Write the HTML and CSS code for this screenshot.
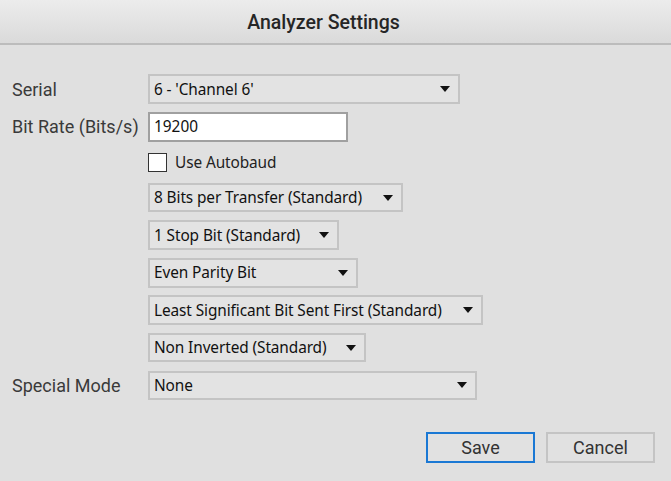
FILE: index.html
```html
<!DOCTYPE html>
<html>
<head>
<meta charset="utf-8">
<link rel="stylesheet" href="styles.css">
</head>
<body>
<div class="dialog">
  <div class="titlebar">Analyzer Settings</div>
  <div class="content">
    <div class="form">
      <div class="label">Serial</div>
      <div class="combo w-serial"><span>6 - 'Channel 6'</span><i class="arrow"></i></div>

      <div class="label">Bit Rate (Bits/s)</div>
      <div class="input">19200</div>

      <div></div>
      <div class="check"><span class="box"></span><span class="check-text">Use Autobaud</span></div>

      <div></div>
      <div class="combo w-bits"><span>8 Bits per Transfer (Standard)</span><i class="arrow"></i></div>

      <div></div>
      <div class="combo w-stop"><span>1 Stop Bit (Standard)</span><i class="arrow"></i></div>

      <div></div>
      <div class="combo w-parity"><span>Even Parity Bit</span><i class="arrow"></i></div>

      <div></div>
      <div class="combo w-lsb"><span>Least Significant Bit Sent First (Standard)</span><i class="arrow"></i></div>

      <div></div>
      <div class="combo w-inv"><span>Non Inverted (Standard)</span><i class="arrow"></i></div>

      <div class="label">Special Mode</div>
      <div class="combo w-special"><span>None</span><i class="arrow"></i></div>
    </div>
    <div class="buttons">
      <div class="btn primary">Save</div>
      <div class="btn">Cancel</div>
    </div>
  </div>
</div>
</body>
</html>
```
FILE: styles.css
```css
html, body {
  margin: 0;
  padding: 0;
  width: 671px;
  height: 481px;
  overflow: hidden;
  background: #e0e0e0;
}
.dialog {
  width: 671px;
  height: 481px;
  display: flex;
  flex-direction: column;
  font-family: Roboto, "Noto Sans", sans-serif;
}
.titlebar {
  height: 45px;
  border-bottom: 2px solid #bcbcbc;
  background: linear-gradient(#ececec, #dadada);
  display: flex;
  align-items: center;
  justify-content: center;
  font-size: 19.5px;
  font-weight: 500;
  color: #262626;
  box-sizing: border-box;
  padding: 1px 24px 0 0;
}
.content {
  flex: 1;
  display: flex;
  flex-direction: column;
  padding: 29px 16px 0 12px;
}
.form {
  display: grid;
  grid-template-columns: 136px auto;
  grid-template-rows: 30px 30px 26px 30px 30px 30px 30px 30px 30px;
  row-gap: 7.5px;
  align-items: center;
  justify-items: start;
}
.label {
  font-size: 18px;
  color: #3a3a3a;
}
.combo {
  height: 30px;
  box-sizing: border-box;
  border: 2px solid #c4c4c4;
  background: #e3e3e3;
  display: flex;
  align-items: center;
  justify-content: space-between;
  padding: 0 8px 0 4px;
  font-family: "Noto Sans", "DejaVu Sans", sans-serif;
  font-size: 15.4px;
  color: #111;
  letter-spacing: -0.1px;
}
.arrow {
  width: 0;
  height: 0;
  border-left: 5px solid transparent;
  border-right: 5px solid transparent;
  border-top: 6px solid #111;
  margin-left: 10px;
  flex-shrink: 0;
}
.w-serial { width: 312px; }
.w-bits { width: 255px; height: 29px; }
.w-stop { width: 191px; }
.w-parity { width: 210px; }
.w-lsb { width: 335px; }
.w-inv { width: 218px; height: 29px; }
.w-special { width: 329px; height: 29px; }
.input {
  width: 200px;
  height: 30px;
  box-sizing: border-box;
  border: 2px solid #a0a0a0;
  background: #fff;
  display: flex;
  align-items: center;
  padding-left: 4px;
  font-family: "Noto Sans", "DejaVu Sans", sans-serif;
  font-size: 15.4px;
  color: #111;
}
.check {
  display: flex;
  align-items: center;
  gap: 8px;
}
.box {
  width: 19px;
  height: 19px;
  box-sizing: border-box;
  border: 1px solid #333;
  background: #fff;
}
.check-text {
  font-family: "Noto Sans", "DejaVu Sans", sans-serif;
  font-size: 15.4px;
  color: #222;
  letter-spacing: -0.1px;
}
.buttons {
  display: flex;
  justify-content: flex-end;
  gap: 11px;
  margin-top: 32px;
}
.btn {
  width: 109px;
  height: 31px;
  box-sizing: border-box;
  border: 2px solid #c4c4c4;
  background: #e1e1e1;
  display: flex;
  align-items: center;
  justify-content: center;
  font-size: 18px;
  color: #333;
}
.btn.primary {
  border-color: #1a78d4;
}
```
